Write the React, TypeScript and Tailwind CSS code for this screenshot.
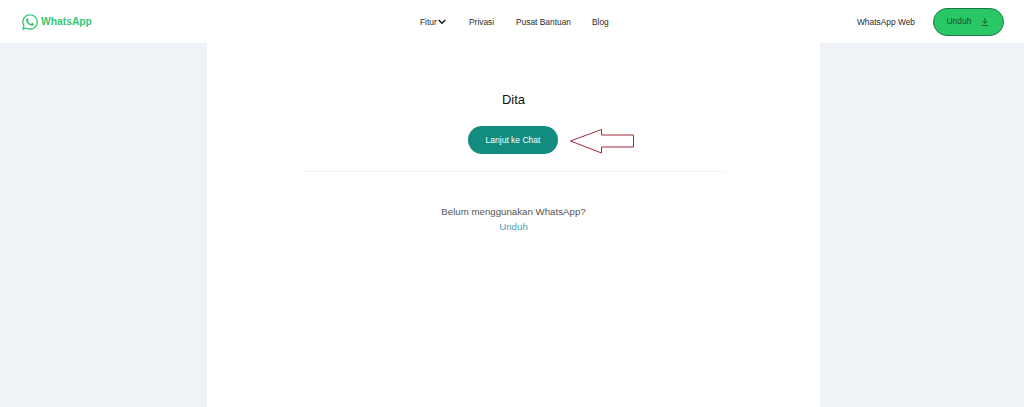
import { FaWhatsapp } from 'react-icons/fa';

function NavLink({ label, className = '' }: { label: string; className?: string }) {
  return <a className={`text-[8.4px] leading-[12px] text-[#2a2c2e] ${className}`}>{label}</a>;
}

function Header() {
  return (
    <header className="flex h-[43px] items-center bg-white pl-[21px] pr-[20px]">
      <div className="flex w-[399px] items-center gap-[2px] text-[#36c674]">
        <FaWhatsapp className="h-[18px] w-[18px]" />
        <span className="pt-px text-[10.3px] font-bold leading-none">WhatsApp</span>
      </div>
      <nav className="flex items-center">
        <a className="flex w-[49px] items-center gap-[1px] text-[8.4px] leading-[12px] text-[#2a2c2e]">
          Fitur
          <svg width="8" height="6" viewBox="0 0 8 6" fill="none" stroke="#111" strokeWidth="1.3">
            <path d="M.7 1l3.3 3.3L7.3 1" />
          </svg>
        </a>
        <NavLink label="Privasi" className="w-[47px]" />
        <NavLink label="Pusat Bantuan" className="w-[76px]" />
        <NavLink label="Blog" />
      </nav>
      <div className="ml-auto flex items-center gap-[18px]">
        <NavLink label="WhatsApp Web" />
        <button className="flex h-[28px] w-[71px] items-center justify-center gap-[9px] rounded-full border border-[#1b7a48] bg-[#2ac864] pr-[2px] text-[8.5px] text-[#14532d]">
          Unduh
          <svg width="8" height="8" viewBox="0 0 8 8" fill="none" stroke="#14532d" strokeWidth="0.9">
            <path d="M4 0v5M1.6 3L4 5.4 6.4 3M.8 7.5h6.4" />
          </svg>
        </button>
      </div>
    </header>
  );
}

export default function App() {
  return (
    <div className="h-[407px] w-[1024px] overflow-hidden bg-[#eff3f8] font-['Liberation_Sans',Arial,sans-serif]">
      <Header />
      <main className="ml-[207px] flex h-[364px] w-[613px] flex-col items-center bg-white pt-[49px]">
        <h1 className="text-[13px] leading-[16px] text-[#111]">Dita</h1>
        <div className="relative mr-[1px] mt-[18px]">
          <button className="flex h-[28px] w-[90px] items-center justify-center rounded-full bg-[#128c7e] pt-[1px] text-[8.5px] text-white">
            Lanjut ke Chat
          </button>
          <svg className="absolute left-[101px] top-[2px]" width="66" height="26" viewBox="0 0 66 26" fill="#fff" stroke="#a8283a" strokeWidth="1">
            <path d="M1.5 13L32.5 1.5V7H64.5V19H32.5V25Z" />
          </svg>
        </div>
        <div className="mt-[17px] h-px w-[424px] bg-[#f3f4f5]" />
        <p className="mt-[33px] text-[9.7px] leading-[14px] text-[#555]">Belum menggunakan WhatsApp?</p>
        <a className="mt-px text-[9.7px] leading-[14px] text-[#4a9fb8]">Unduh</a>
      </main>
    </div>
  );
}
